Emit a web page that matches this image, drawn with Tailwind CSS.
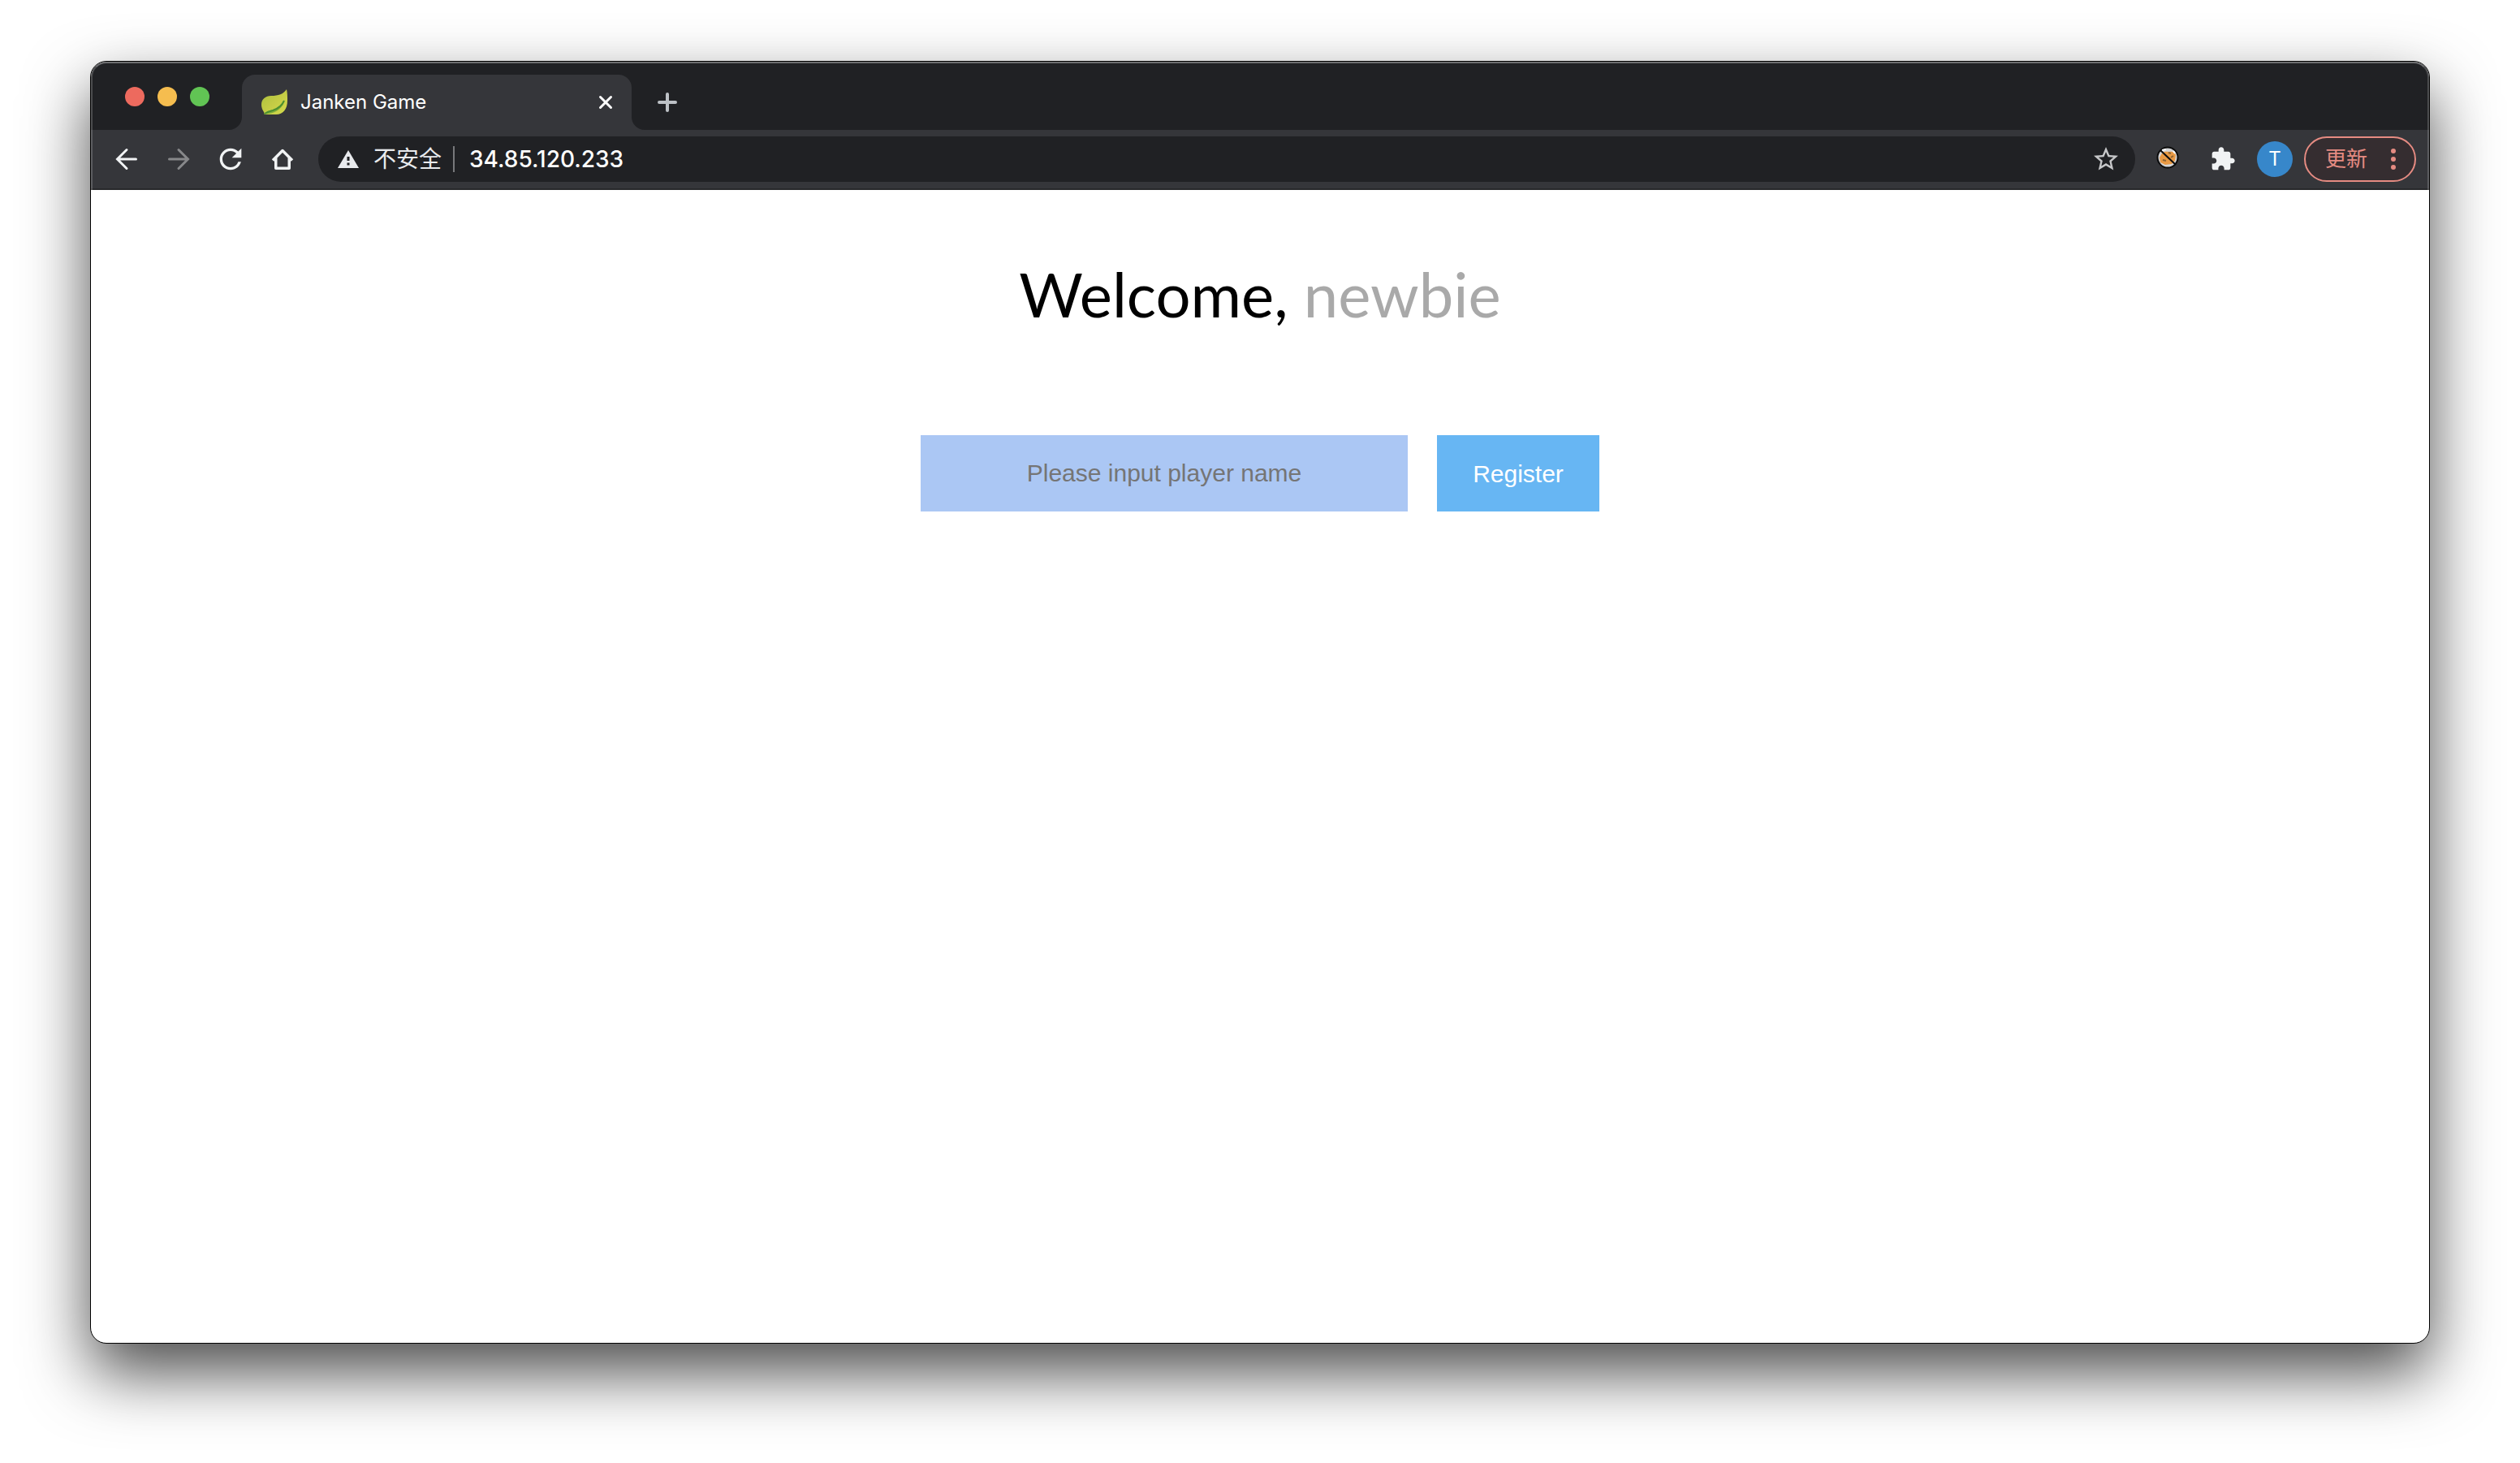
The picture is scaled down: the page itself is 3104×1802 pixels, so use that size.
<!DOCTYPE html>
<html lang="en">
<head>
<meta charset="utf-8">
<meta name="viewport" content="width=device-width, initial-scale=1">
<title>Janken Game</title>
<script src="https://cdn.jsdelivr.net/npm/@tailwindcss/browser@4"></script>
</head>
<body class="flex min-h-screen flex-col bg-white px-[111px] pt-[75px] pb-[147px] font-['Inter','Noto_Sans_CJK_SC',sans-serif]">
<div class="flex grow flex-col overflow-hidden rounded-[20px] border border-black bg-white shadow-[0_36px_80px_rgba(0,0,0,0.7)]">

  <header class="relative bg-[#202124] after:pointer-events-none after:absolute after:inset-0 after:rounded-t-[19px] after:border-x-2 after:border-t-2 after:border-x-white/20 after:border-t-white/35 after:content-['']">
    <!-- Tab strip -->
    <div class="flex h-[84px] items-end pl-[42px]">
      <div class="mb-[29px] flex gap-4">
        <button type="button" aria-label="Close window" class="size-6 rounded-full bg-[#ed6a5e]"></button>
        <button type="button" aria-label="Minimize window" class="size-6 rounded-full bg-[#f5bd4f]"></button>
        <button type="button" aria-label="Zoom window" class="size-6 rounded-full bg-[#61c454]"></button>
      </div>
      <svg class="ml-6 size-4 text-[#35363a]" viewBox="0 0 16 16" fill="currentColor" aria-hidden="true"><path d="M16 0v16H0A16 16 0 0 0 16 0z"/></svg>
      <div class="flex h-[68px] w-[480px] items-center rounded-t-2xl bg-[#35363a] pr-[22px] pl-6">
        <svg class="size-8 shrink-0" viewBox="0 0 32 32" aria-hidden="true">
          <defs><linearGradient id="leaf" x1="0" y1="0" x2="1" y2="1"><stop offset="0" stop-color="#a9bf3c"/><stop offset=".5" stop-color="#c3cb45"/><stop offset="1" stop-color="#d3db4c"/></linearGradient></defs>
          <path d="M31 0c1 4 1 9 1 14 0 10-5 17-14 17H4l-1-3c-2-3-3-6-3-9 0-7 5-11 12-11 9 0 15-2 19-8z" fill="url(#leaf)"/>
          <path d="M29 12c-2 8-7 11-14 13-5 1-9 2-12 6l6-1c9-1 18-7 20-18z" fill="#7fae3a"/>
          <path d="M28 14c-3 7-8 10-14 12-4 1-7 2-10 4" fill="none" stroke="#4c8f30" stroke-width="2"/>
        </svg>
        <span class="ml-4 grow text-2xl text-white">Janken Game</span>
        <button type="button" aria-label="Close tab" class="size-5 text-white">
          <svg class="size-5" viewBox="0 0 20 20" fill="none" stroke="currentColor" stroke-width="3" stroke-linecap="round"><path d="M3.500 3.500l13 13M16.500 3.500l-13 13"/></svg>
        </button>
      </div>
      <svg class="size-4 text-[#35363a]" viewBox="0 0 16 16" fill="currentColor" aria-hidden="true"><path d="M0 0v16h16A16 16 0 0 1 0 0z"/></svg>
      <button type="button" aria-label="New tab" class="mb-[18px] ml-3 flex size-8 items-center justify-center text-[#bdc1c6]">
        <svg class="size-6" viewBox="0 0 24 24" fill="none" stroke="currentColor" stroke-width="4" stroke-linecap="round"><path d="M2 12h20M12 2v20"/></svg>
      </button>
    </div>

    <!-- Toolbar -->
    <div class="flex items-center border-b-2 border-[#28292b] bg-[#35363a] pt-2 pr-4 pb-2 pl-3">
      <nav class="flex text-[#f1f3f4]" aria-label="Navigation">
        <button type="button" aria-label="Back" class="flex h-14 w-16 items-center justify-center">
          <svg class="size-8" viewBox="0 0 32 32" fill="none" stroke="currentColor" stroke-width="3" stroke-linecap="round"><path d="M27.500 16H5M16 4.500L4.500 16 16 27.500"/></svg>
        </button>
        <button type="button" aria-label="Forward" class="flex h-14 w-16 items-center justify-center text-[#87888a]">
          <svg class="size-8" viewBox="0 0 32 32" fill="none" stroke="currentColor" stroke-width="3" stroke-linecap="round"><path d="M4.500 16H27M16 4.500L27.500 16 16 27.500"/></svg>
        </button>
        <button type="button" aria-label="Reload" class="flex h-14 w-16 items-center justify-center">
          <svg class="size-10" viewBox="0 0 24 24" fill="currentColor"><path d="M17.650 6.350A7.958 7.958 0 0 0 12 4c-4.420 0-7.990 3.580-7.990 8s3.570 8 7.990 8c3.730 0 6.840-2.550 7.730-6h-2.080A5.990 5.990 0 0 1 12 18c-3.310 0-6-2.690-6-6s2.690-6 6-6c1.660 0 3.140.690 4.220 1.780L13 11h7V4l-2.350 2.350z"/></svg>
        </button>
        <button type="button" aria-label="Home" class="flex h-14 w-16 items-center justify-center">
          <svg class="size-8" viewBox="0 0 32 32" fill="none" stroke="currentColor" stroke-width="3.500"><path d="M4 17.500L16 5.500l12 12M7.750 14.500v12.750h16.500V14.500" stroke-linejoin="round"/></svg>
        </button>
      </nav>

      <div class="ml-3 flex h-14 grow items-center rounded-full bg-[#202124] pr-[18px] pl-6">
        <button type="button" class="flex items-center text-[28px] leading-10 text-[#e8eaed]">
          <svg class="mr-[18px] h-[22px] w-[26px]" viewBox="0 0 26 22" aria-hidden="true"><path d="M13 0l13 22H0z" fill="currentColor"/><path d="M11.500 8h3v5h-3zM11.500 15.500h3v3h-3z" fill="#202124"/></svg>
          不安全
        </button>
        <span class="ml-[14px] h-8 w-0.5 bg-[#77787b]"></span>
        <input type="text" value="34.85.120.233" aria-label="Address" class="ml-[18px] min-w-0 grow bg-transparent text-[28px] leading-10 font-medium text-white outline-none">
        <button type="button" aria-label="Bookmark this page" class="size-9 text-[#c6c7c9]">
          <svg class="size-9" viewBox="0 0 24 24" fill="currentColor"><path d="M22 9.240l-7.190-.620L12 2 9.190 8.630 2 9.240l5.460 4.730L5.820 21 12 17.270 18.180 21l-1.630-7.030L22 9.240zM12 15.400l-3.760 2.270 1-4.280-3.320-2.880 4.380-.380L12 6.100l1.710 4.040 4.380.380-3.320 2.880 1 4.280L12 15.400z"/></svg>
        </button>
      </div>

      <button type="button" aria-label="Cookie extension" class="ml-2 flex h-14 w-16 items-start justify-center pt-3">
        <svg class="size-7" viewBox="0 0 28 28">
          <circle cx="14" cy="14" r="12.500" fill="#d3d4d6" stroke="#0c0c0c" stroke-width="2"/>
          <path d="M7 9c3-3 6-2 9-2 4-1 7 1 8 4l-1 7-4 4-8 1-6-3-1-6z" fill="#e99a45"/>
          <path d="M8 17l4 1M15 8l3 1M18 14l3-2" stroke="#8c6534" stroke-width="2"/>
          <path d="M7 5l5-1M21 6l2 3" stroke="#fff" stroke-width="2"/>
          <path d="M5 5l19 18" stroke="#0c0c0c" stroke-width="2"/>
        </svg>
      </button>
      <button type="button" aria-label="Extensions" class="ml-1 flex h-14 w-16 items-center justify-center text-[#f1f3f4]">
        <svg class="size-8" viewBox="0 0 24 24" fill="currentColor"><path d="M20.500 11H19V7c0-1.100-.900-2-2-2h-4V3.500C13 2.120 11.880 1 10.500 1S8 2.120 8 3.500V5H4c-1.100 0-1.990.900-1.990 2v3.800H3.500c1.490 0 2.700 1.210 2.700 2.700s-1.210 2.700-2.700 2.700H2V20c0 1.100.900 2 2 2h3.800v-1.500c0-1.490 1.210-2.700 2.700-2.700s2.700 1.210 2.700 2.700V22H17c1.100 0 2-.900 2-2v-4h1.500c1.380 0 2.500-1.120 2.500-2.500S21.880 11 20.500 11z"/></svg>
      </button>
      <button type="button" aria-label="Profile T" class="mr-[14px] ml-[10px] size-11 rounded-full bg-[#3787ca] text-2xl text-white">T</button>
      <button type="button" class="flex h-14 w-[138px] items-center justify-between rounded-full border-2 border-[#e58b82] bg-[#352d30] pr-[22px] pl-6 text-[26px] leading-10 text-[#e58b82]">
        更新
        <svg class="h-7 w-2" viewBox="0 0 8 28" fill="currentColor" aria-hidden="true"><circle cx="4" cy="4" r="3"/><circle cx="4" cy="14" r="3"/><circle cx="4" cy="24" r="3"/></svg>
      </button>
    </div>
  </header>

  <main class="flex flex-col items-center pt-[78px] font-['Liberation_Sans',Arial,sans-serif]">
    <h1 class="font-['Papyrus','Lato',fantasy] text-[76px] leading-[100px] text-black">Welcome, <span class="text-[#a9a9a9]">newbie</span></h1>
    <form class="mt-[124px] flex gap-9">
      <input type="text" aria-label="Player name" placeholder="Please input player name" class="h-[94px] w-[600px] bg-[#abc7f4] text-center text-[30px] text-black outline-none placeholder:text-[#757575]">
      <button type="submit" class="h-[94px] w-[200px] bg-[#67b6f3] text-[30px] text-white">Register</button>
    </form>
  </main>
</div>
</body>
</html>
